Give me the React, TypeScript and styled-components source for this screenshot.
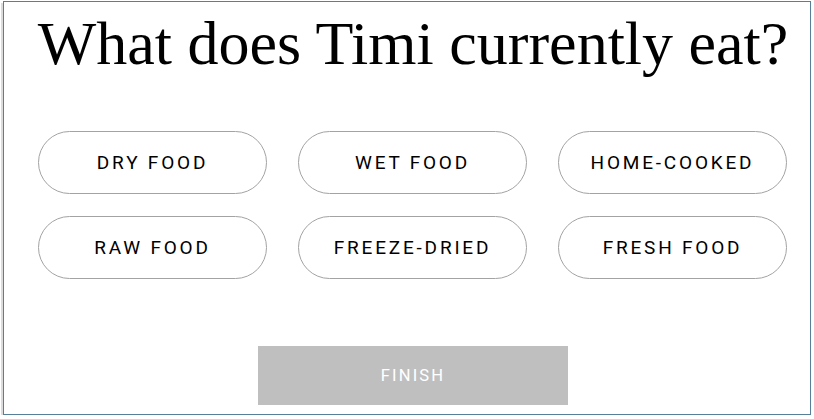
import React from 'react';
import styled, { createGlobalStyle } from 'styled-components';

const GlobalStyle = createGlobalStyle`
  html, body {
    margin: 0;
    padding: 0;
    background: #ffffff;
  }
`;

const options = ['Dry food', 'Wet food', 'Home-cooked', 'Raw food', 'Freeze-dried', 'Fresh food'];

export default function App() {
  return (
    <>
      <GlobalStyle />
      <SFrame>
        <STitle>What does Timi currently eat?</STitle>
        <SGrid>
          {options.map((o) => (
            <SPill key={o} type="button">
              {o}
            </SPill>
          ))}
        </SGrid>
        <SFooter>
          <SFinish type="button" disabled>
            Finish
          </SFinish>
        </SFooter>
      </SFrame>
    </>
  );
}

const SFrame = styled.div`
  box-sizing: border-box;
  margin: 1px 0 0 3px;
  width: 808px;
  height: 414px;
  border: 1px solid #56809a;
  box-shadow: -2px 2px 0 #dcdcdc;
  padding: 0 0 0 34px;
  display: flex;
  flex-direction: column;
`;

const STitle = styled.h1`
  margin: 5px 0 0 0;
  width: 750px;
  display: flex;
  justify-content: center;
  white-space: nowrap;
  font-family: 'Liberation Serif', 'DejaVu Serif', serif;
  font-weight: normal;
  font-size: 62px;
  line-height: 72px;
  color: #000;
`;

const SGrid = styled.div`
  margin-top: 52px;
  display: grid;
  grid-template-columns: repeat(3, 229px);
  column-gap: 31px;
  row-gap: 22px;
`;

const SPill = styled.button`
  box-sizing: border-box;
  height: 63px;
  border: 1px solid #a3a3a3;
  border-radius: 32px;
  background: #fff;
  font-family: Roboto, 'Liberation Sans', sans-serif;
  font-size: 19px;
  letter-spacing: 2.8px;
  text-transform: uppercase;
  color: #000;
  padding: 0;
  cursor: pointer;
`;

const SFooter = styled.div`
  margin-top: 67px;
  width: 750px;
  display: flex;
  justify-content: center;
`;

const SFinish = styled.button`
  width: 310px;
  height: 59px;
  border: none;
  background: #bfbfbf;
  color: #fff;
  font-family: Roboto, 'Liberation Sans', sans-serif;
  font-size: 16.5px;
  letter-spacing: 2.2px;
  text-transform: uppercase;
  padding: 0;
`;
